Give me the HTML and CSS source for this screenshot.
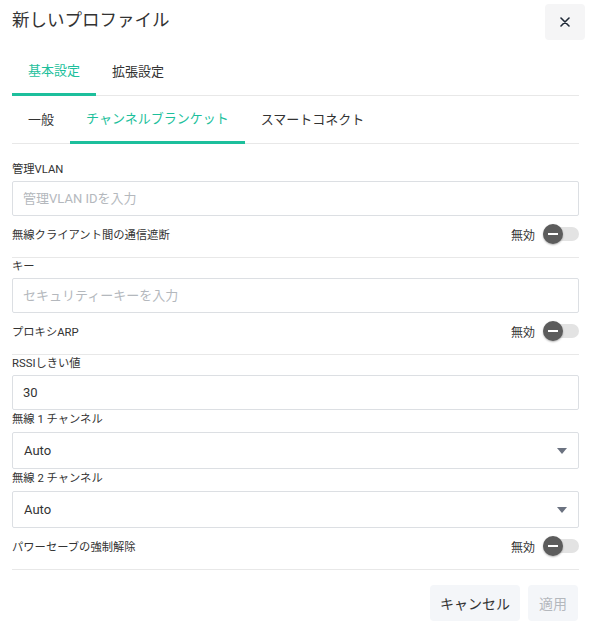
FILE: index.html
```html
<!DOCTYPE html>
<html lang="ja">
<head>
    <meta charset="utf-8">
    <title>新しいプロファイル</title>
    <link rel="stylesheet" href="styles.css">
</head>
<body>
    <div class="dialog">
        <div class="dialog-header">
            <div class="dialog-title">新しいプロファイル</div>
            <button class="close-btn" aria-label="閉じる">
                <svg width="10" height="10" viewBox="0 0 10 10"><path d="M1 1L9 9M9 1L1 9" stroke="#1f2937" stroke-width="1.6" stroke-linecap="round"/></svg>
            </button>
        </div>

        <div class="tabs">
            <div class="tab active">基本設定</div>
            <div class="tab">拡張設定</div>
        </div>
        <div class="tabs">
            <div class="tab">一般</div>
            <div class="tab active">チャンネルブランケット</div>
            <div class="tab">スマートコネクト</div>
        </div>

        <div class="form">
            <div class="field">
                <label class="label">管理VLAN</label>
                <input class="input" type="text" placeholder="管理VLAN IDを入力">
            </div>
            <div class="switch-row">
                <span>無線クライアント間の通信遮断</span>
                <span class="switch-wrap">無効 <span class="switch"><span class="knob"></span></span></span>
            </div>
            <div class="divider"></div>

            <div class="field">
                <label class="label">キー</label>
                <input class="input" type="text" placeholder="セキュリティーキーを入力">
            </div>
            <div class="switch-row">
                <span>プロキシARP</span>
                <span class="switch-wrap">無効 <span class="switch"><span class="knob"></span></span></span>
            </div>
            <div class="divider"></div>

            <div class="field">
                <label class="label">RSSIしきい値</label>
                <input class="input" type="text" value="30">
            </div>
            <div class="field">
                <label class="label tight">無線 1 チャンネル</label>
                <div class="select">Auto <span class="caret"></span></div>
            </div>
            <div class="field">
                <label class="label tight">無線 2 チャンネル</label>
                <div class="select">Auto <span class="caret"></span></div>
            </div>
            <div class="switch-row">
                <span>パワーセーブの強制解除</span>
                <span class="switch-wrap">無効 <span class="switch"><span class="knob"></span></span></span>
            </div>
            <div class="divider"></div>
        </div>

        <div class="footer">
            <button class="btn">キャンセル</button>
            <button class="btn disabled">適用</button>
        </div>
    </div>
</body>
</html>
```

FILE: styles.css
```css
body {
    margin: 0;
    background: #fff;
    font-family: Roboto, "Noto Sans CJK JP", sans-serif;
    color: #333;
}
.dialog {
    width: 592px;
    padding: 0 13px 0 12px;
    box-sizing: border-box;
}
.dialog-header {
    height: 48px;
    display: flex;
    justify-content: space-between;
    align-items: flex-start;
    margin-right: -6px;
}
.dialog-title {
    font-size: 17.5px;
    line-height: 24px;
    padding-top: 8px;
    color: #333;
}
.close-btn {
    width: 40px;
    height: 36px;
    margin-top: 4px;
    border: none;
    border-radius: 4px;
    background: #f5f5f6;
    display: flex;
    align-items: center;
    justify-content: center;
    cursor: pointer;
}
.tabs {
    display: flex;
    align-items: flex-start;
    height: 47px;
    border-bottom: 1px solid #e8e8e8;
}
.tab {
    height: 47px;
    line-height: 48px;
    padding: 0 16px;
    font-size: 13px;
    color: #333;
    box-sizing: border-box;
}
.tab.active {
    color: #1dbf9c;
    border-bottom: 3px solid #1dbf9c;
    height: 48px;
    line-height: 46px;
}
.form {
    padding-top: 17px;
}
.label {
    display: block;
    font-size: 11.3px;
    line-height: 18px;
    color: #333;
    margin-bottom: 2px;
}
.label.tight {
    line-height: 19px;
    margin-bottom: 3px;
}
.input {
    display: block;
    width: 100%;
    height: 35px;
    box-sizing: border-box;
    border: 1px solid #dcdfe3;
    border-radius: 2px;
    padding: 0 10px;
    font-family: inherit;
    font-size: 13px;
    color: #333;
    outline: none;
}
.input::placeholder {
    color: #b4b8bd;
}
.select {
    height: 37px;
    box-sizing: border-box;
    border: 1px solid #dcdfe3;
    border-radius: 2px;
    padding: 0 11px;
    font-size: 13px;
    display: flex;
    align-items: center;
    justify-content: space-between;
}
.caret {
    width: 0;
    height: 0;
    border-left: 5px solid transparent;
    border-right: 5px solid transparent;
    border-top: 6px solid #6b7280;
}
.switch-row {
    height: 36px;
    display: flex;
    align-items: center;
    justify-content: space-between;
    font-size: 11.3px;
    color: #333;
}
.switch-wrap {
    display: flex;
    align-items: center;
    gap: 8px;
    font-size: 12px;
}
.switch {
    position: relative;
    width: 36px;
    height: 14px;
    border-radius: 7px;
    background: #e3e3e3;
}
.knob {
    position: absolute;
    left: 0;
    top: -3px;
    width: 20px;
    height: 20px;
    border-radius: 50%;
    background: #5c5c5c;
    box-shadow: 0 1px 2px rgba(0, 0, 0, 0.3);
}
.knob::after {
    content: "";
    position: absolute;
    left: 5px;
    top: 9px;
    width: 10px;
    height: 2px;
    background: #fff;
}
.divider {
    height: 1px;
    background: #e8e8e8;
    margin-top: 5px;
}
.footer {
    display: flex;
    justify-content: flex-end;
    gap: 8px;
    padding-top: 15px;
    margin-right: 1px;
}
.btn {
    height: 36px;
    min-width: 50px;
    padding: 0 10px;
    border: none;
    border-radius: 4px;
    background: #f4f6f9;
    font-family: inherit;
    font-size: 14px;
    color: #333;
    cursor: pointer;
}
.btn.disabled {
    color: #b4b8bd;
    cursor: default;
}
```
